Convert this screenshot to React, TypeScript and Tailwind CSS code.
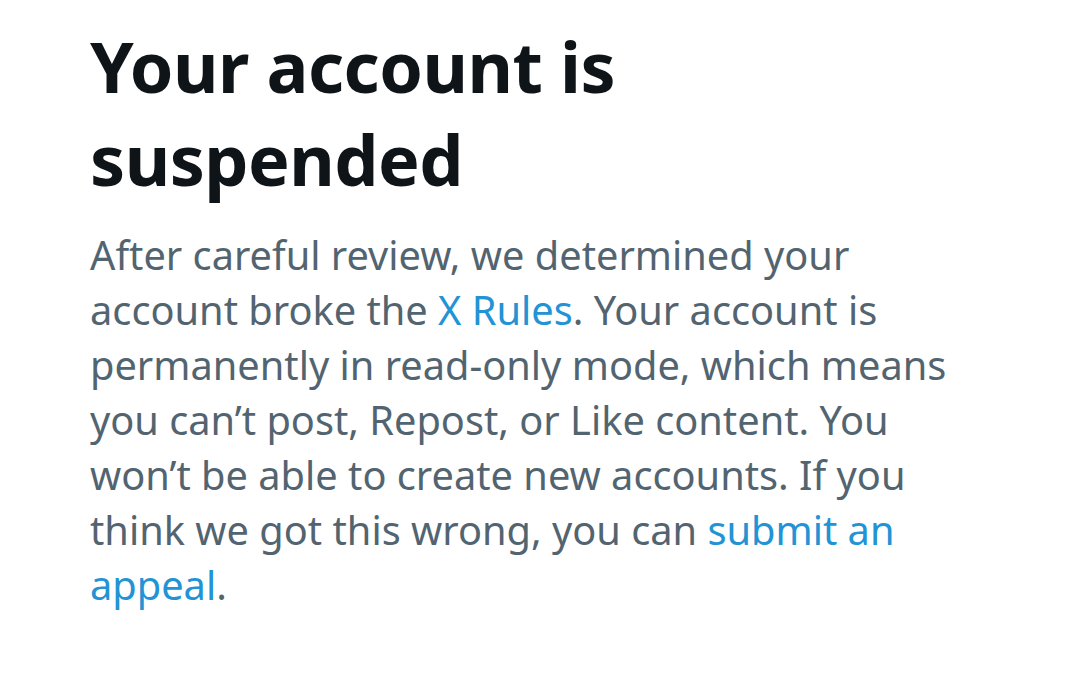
import React from "react";

const App = () => {
  return (
    <div
      className="w-[1080px] h-[698px] bg-white overflow-hidden"
      style={{ fontFamily: '"Noto Sans", "Open Sans", sans-serif' }}
    >
      <div className="pl-[90px] pt-[20px]">
        {/* Title */}
        <h1 className="text-[70px] leading-[93px] font-bold text-[#0f1419] tracking-[-0.5px]">
          Your account is
          <br />
          suspended
        </h1>

        {/* Body */}
        <p className="mt-[22px] w-[880px] text-[39.75px] leading-[55px] text-[#536471]">
          After careful review, we determined your account broke the{" "}
          <a className="text-[#2293d4]">X Rules</a>. Your account is
          permanently in read-only mode, which means you can’t post, Repost,
          or Like content. You won’t be able to create new accounts. If you
          think we got this wrong, you can{" "}
          <a className="text-[#2293d4]">submit an appeal</a>.
        </p>
      </div>
    </div>
  );
};

export default App;
